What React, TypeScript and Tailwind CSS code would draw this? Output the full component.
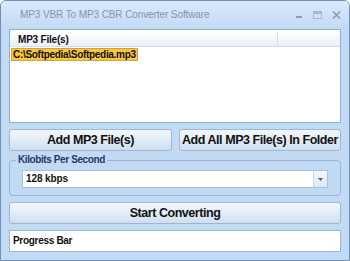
import React from 'react'

// MP3 VBR -> CBR converter window (Win7 basic-ish frame)
const btn =
  'flex items-center justify-center h-[22px] rounded-[3px] border border-[#9db6d4] bg-gradient-to-b from-[#f3f7fc] via-[#e3ecf7] to-[#cfdeef] text-[12.5px] tracking-[-0.45px] font-bold text-[#111] whitespace-nowrap'

export default function App() {
  return (
    <div
      className="w-[350px] h-[261px] flex flex-col bg-[#c3daf5] border border-[#6f8fb8] rounded-t-[6px] overflow-hidden"
      style={{ fontFamily: '"Liberation Sans", Arial, sans-serif' }}
    >
      {/* title bar */}
      <div className="h-[27px] shrink-0 flex items-center pl-[19px] pr-[8px] bg-gradient-to-b from-[#dceafb] to-[#c3daf5]">
        <span className="text-[10px] tracking-[-0.1px] text-[#8294ac]">MP3 VBR To MP3 CBR Converter Software</span>
        <div className="ml-auto flex items-center gap-[10px]">
          <svg width="8" height="8" viewBox="0 0 8 8"><rect x="1" y="5" width="6" height="2" fill="#8a9bb2" /></svg>
          <svg width="9" height="8" viewBox="0 0 9 8"><rect x="0.5" y="0.5" width="8" height="7" fill="none" stroke="#a9b7c9" /><rect x="1" y="1" width="7" height="2" fill="#a9b7c9" /></svg>
          <svg width="9" height="8" viewBox="0 0 9 8"><path d="M1 0.5 L8 7.5 M8 0.5 L1 7.5" stroke="#8a9bb2" strokeWidth="1.6" /></svg>
        </div>
      </div>

      <div className="flex-1 flex flex-col px-[8px] pt-[1px]">
        {/* file list */}
        <div className="h-[94px] bg-white border border-[#8fb0d6] flex flex-col">
          <div className="mt-[2px] h-[15px] flex border-b border-[#d5dfea] bg-gradient-to-b from-[#ffffff] to-[#e9f0f8]">
            <div className="w-[268px] border-r border-[#d5dfea] pl-[8px] text-[10px] tracking-[-0.2px] font-bold leading-[15px] text-[#111]">MP3 File(s)</div>
          </div>
          <div className="flex pl-[1px] pt-[1px]">
            <span className="bg-[#fcc53d] border border-[#c9a448] px-[1px] text-[10px] tracking-[-0.3px] font-bold leading-[11px] text-[#111]">C:\Softpedia\Softpedia.mp3</span>
          </div>
        </div>

        {/* add buttons */}
        <div className="mt-[6px] flex gap-[7px]">
          <div className={`${btn} w-[163px]`}>Add MP3 File(s)</div>
          <div className={`${btn} flex-1`}>Add All MP3 File(s) In Folder</div>
        </div>

        {/* kbps group */}
        <div className="mt-[9px] relative h-[36px] border border-[#93b3d8] rounded-[4px] px-[12px] pt-[9px]">
          <span className="absolute left-[6px] top-[-7px] px-[2px] bg-[#c3daf5] text-[10px] tracking-[-0.4px] font-bold leading-[12px] text-[#1d3b63]">Kilobits Per Second</span>
          <div className="h-[18px] flex bg-white border border-[#a9c0dc]">
            <span className="flex-1 pl-[3px] text-[10px] tracking-[-0.1px] font-bold leading-[16px] text-[#111]">128 kbps</span>
            <div className="w-[14px] flex items-center justify-center border-l border-[#c7d5e6] bg-gradient-to-b from-[#f5f8fc] to-[#e1e9f3]">
              <svg width="5" height="3" viewBox="0 0 5 3"><path d="M0 0 H5 L2.5 3 Z" fill="#4a5d78" /></svg>
            </div>
          </div>
        </div>

        <div className={`${btn} mt-[6px]`}>Start Converting</div>

        <div className="mt-[6px] h-[22px] bg-white border border-[#97b6da] pl-[3px] text-[10px] tracking-[-0.3px] font-bold leading-[20px] text-[#111]">Progress Bar</div>
      </div>
    </div>
  )
}
